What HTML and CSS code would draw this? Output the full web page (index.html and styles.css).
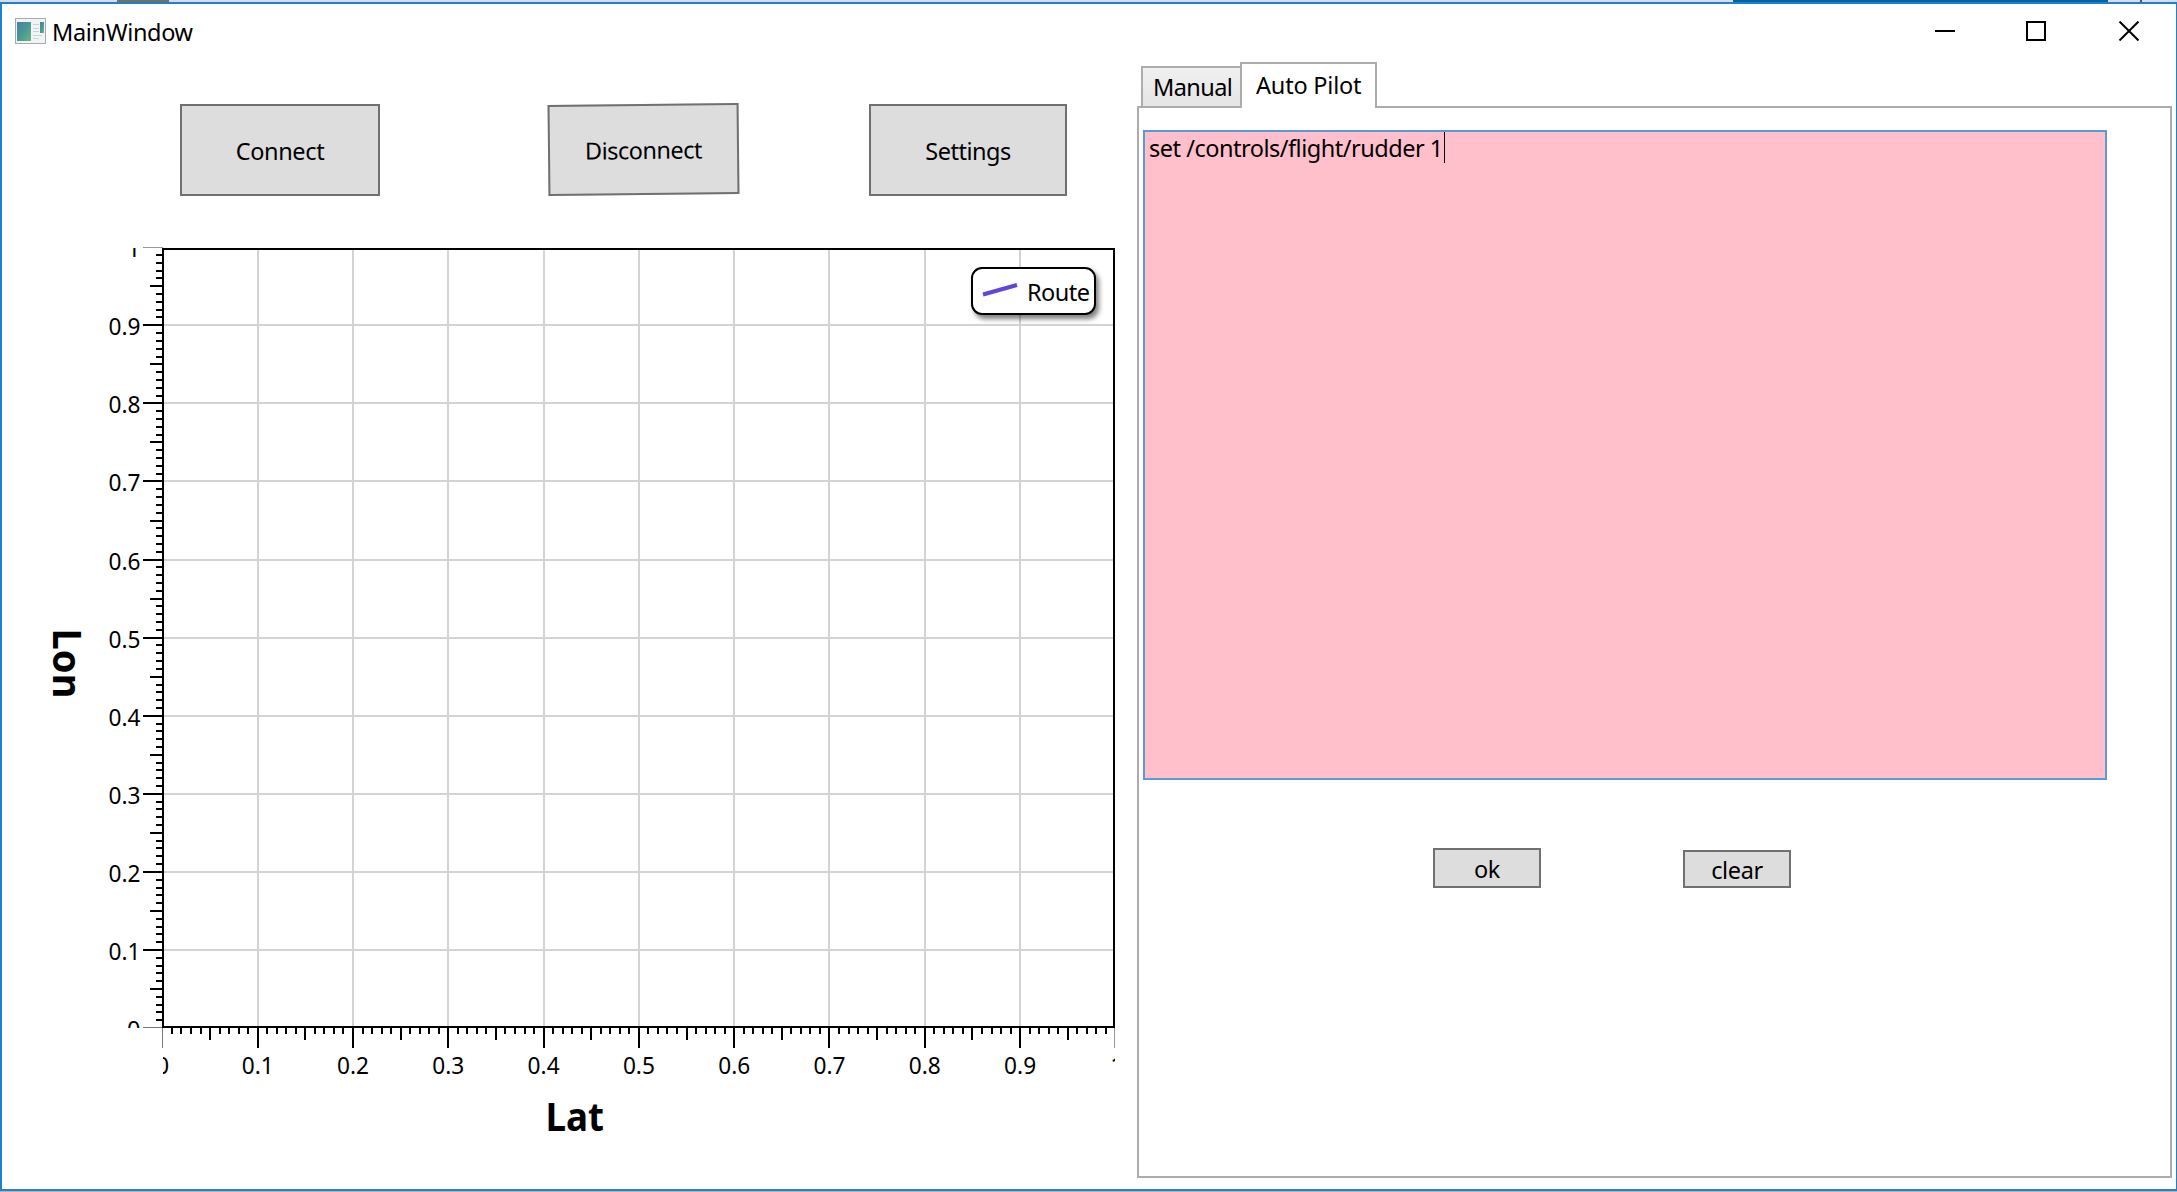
FILE: index.html
```html
<!DOCTYPE html>
<html lang="en">
<head>
<meta charset="utf-8">
<title>MainWindow</title>
<link rel="stylesheet" href="styles.css">
</head>
<body>
<div class="desktop-strip"><span class="strip-photo"></span><span class="strip-blue"></span><span class="strip-mark"></span></div>
<div class="window">
  <header class="titlebar">
    <svg class="app-icon" width="31" height="26" viewBox="0 0 31 26">
      <defs>
        <linearGradient id="screen" x1="0" y1="0" x2="1" y2="1"><stop offset="0" stop-color="#4a7fae"/><stop offset=".5" stop-color="#459a92"/><stop offset="1" stop-color="#6cb584"/></linearGradient>
      </defs>
      <rect x=".5" y=".5" width="30" height="25" fill="#f1f3f5" stroke="#a7abb0"/>
      <rect x="2" y="4" width="14" height="19" fill="url(#screen)"/>
      <path d="M18 6.500h6M18 10.500h6M18 13.500h6M18 17.500h9M18 20.500h6" stroke="#cdd1d8"/>
      <rect x="25" y="4" width="4" height="11" fill="url(#screen)"/>
    </svg>
    <span class="title">MainWindow</span>
    <svg class="controls" width="204" height="20" viewBox="0 0 204 20" fill="none" stroke="#000" stroke-width="2">
      <path d="M0 10h20"/><rect x="92" y="1" width="18" height="18"/><path d="M184.500 .5l19 19M203.500 .5l-19 19"/>
    </svg>
  </header>
  <main class="content">
    <section class="flight">
      <div class="actions">
        <button class="btn connect">Connect</button>
        <button class="btn disconnect">Disconnect</button>
        <button class="btn settings">Settings</button>
      </div>
      <div class="plot">
        <svg id="chart" width="1090" height="940" viewBox="30 240 1090 940"></svg>
        <div class="legend">
          <svg width="36" height="16" viewBox="0 0 36 16"><path d="M1 12.500L35 3" stroke="#6344d9" stroke-width="4"/></svg>
          <span>Route</span>
        </div>
      </div>
    </section>
    <section class="pilot">
      <nav class="tabs"><div class="tab manual">Manual</div><div class="tab active">Auto Pilot</div></nav>
      <div class="panel">
        <div class="commands"><span class="command">set /controls/flight/rudder 1</span><i class="caret"></i></div>
        <div class="panel-actions">
          <button class="btn ok">ok</button>
          <button class="btn clear">clear</button>
        </div>
      </div>
    </section>
  </main>
</div>
<script src="chart.js"></script>
</body>
</html>
```
FILE: styles.css
```css
* { box-sizing: border-box; }
body {
  margin: 0;
  width: 2177px;
  height: 1192px;
  overflow: hidden;
  background: #8dbde6;
  font: 23.5px/32px "Noto Sans", "Open Sans", sans-serif;
  color: #000;
}
.desktop-strip { display: flex; height: 2px; background: #d9dde3; }
.strip-photo { width: 52px; margin-left: 117px; background: #6f7360; }
.strip-blue { width: 375px; margin-left: 1564px; background: #0063a4; }
.strip-mark { width: 2px; margin-left: 32px; background: #4b5560; }
.window {
  display: flex;
  flex-direction: column;
  height: 1189px;
  background: #fff;
  border: 2px solid #1f7fd0;
  border-right-width: 1px;
  border-bottom-color: #3d7cb0;
}
.titlebar { display: flex; height: 58px; padding-left: 13px; }
.app-icon { margin-top: 14px; }
.title { margin: 12px 0 0 6px; letter-spacing: -0.35px; }
.controls { margin: 17px 37px 0 auto; }
.content { display: flex; flex: 1; }
.flight { width: 1135px; }
.actions { display: flex; padding: 42px 0 0 178px; height: 178px; }
.btn {
  height: 92px;
  padding: 1px 0 0;
  border: 2px solid #707070;
  background: #ddd;
  font: inherit;
  letter-spacing: -0.35px;
  color: #000;
}
.connect { width: 200px; }
.disconnect { width: 191px; height: 91px; margin-left: 168px; transform: rotate(-0.6deg); letter-spacing: -0.5px; }
.settings { width: 198px; margin-left: 130px; letter-spacing: -0.5px; }
.plot { position: relative; padding-left: 28px; }
#chart { display: block; }
#chart text { font: 23.5px "Noto Sans", "Open Sans", sans-serif; }
#chart .axis-title { font-size: 40px; font-weight: 700; }
.legend {
  position: absolute;
  left: 969px;
  top: 27px;
  display: flex;
  align-items: center;
  width: 125px;
  height: 48px;
  padding-left: 9px;
  gap: 9px;
  border: 2px solid #000;
  border-radius: 11px;
  background: #fff;
  box-shadow: 3px 4px 5px rgba(0, 0, 0, .5);
  letter-spacing: -0.5px;
}
.legend svg { margin-top: -2px; }
.legend span { padding-top: 2px; }
.pilot { width: 1035px; }
.tabs { display: flex; align-items: flex-end; height: 46px; padding-left: 4px; position: relative; z-index: 1; }
.tab { border: 2px solid #acacac; border-bottom: 0; }
.manual { width: 99px; height: 40px; margin-bottom: 2px; padding: 3px 0 0 10px; background: linear-gradient(#f0f0f0, #e5e5e5); border-right: 0; letter-spacing: -0.6px; }
.active { width: 137px; height: 46px; padding: 5px 0 0 14px; background: #fff; letter-spacing: -0.2px; }
.panel { width: 1035px; height: 1072px; margin-top: -2px; padding: 22px 0 0 4px; border: 2px solid #acacac; }
.commands { display: flex; width: 964px; height: 650px; padding-left: 4px; border: 2px solid #5f98d8; background: #ffc0cb; }
.command { letter-spacing: -0.49px; white-space: pre; }
.caret { width: 1px; height: 31px; margin-left: 1px; background: #000; }
.panel-actions { display: flex; align-items: flex-end; gap: 142px; padding: 68px 0 0 290px; }
.panel-actions .btn { width: 108px; }
.panel-actions .ok { height: 40px; }
.panel-actions .clear { height: 38px; padding-top: 2px; }
```
FILE: chart.js
```js
const svg = document.getElementById('chart');
const px = t => 162.4 + 953 * t;
const py = t => 1028.1 - 780.9 * t;
const parts = [];
const rect = (x, y, w, h, fill) => parts.push(`<rect x="${x}" y="${y}" width="${w}" height="${h}" fill="${fill}"/>`);

// Grid lines
for (let i = 1; i < 10; i++) {
  rect(Math.round(px(i / 10)) - 1, 249, 2, 778, '#d3d3d3');
  rect(164, Math.round(py(i / 10)) - 1, 950, 2, '#d3d3d3');
}
// Axis ticks: major every 10, medium every 5
for (let i = 1; i < 100; i++) {
  const len = i % 10 === 0 ? 20 : i % 5 === 0 ? 13 : 7;
  rect(163 - len, Math.round(py(i / 100)) - 1, len, 2, '#000');
  rect(Math.round(px(i / 100)) - 1, 1028, 2, len - (len < 20 ? 1 : 0), '#000');
}
rect(143, 247, 20, 1, '#999');
rect(143, 1027, 20, 1, '#777');
rect(162, 1028, 1, 20, '#777');
rect(1114, 1028, 1, 20, '#999');
parts.push('<rect x="163" y="249" width="951" height="778" fill="none" stroke="#000" stroke-width="2"/>');

// Tick labels, cut off at the ends of each axis
parts.push('<clipPath id="left"><rect x="90" y="248" width="60" height="780"/></clipPath>');
parts.push('<clipPath id="bottom"><rect x="163" y="1040" width="952" height="60"/></clipPath>');
for (let i = 0; i <= 10; i++) {
  const s = i === 0 ? '0' : i === 10 ? '1' : '0.' + i;
  const len = s.length > 1 ? ' textLength="32" lengthAdjust="spacingAndGlyphs"' : '';
  const dx = i === 10 ? 1.5 : 0;
  parts.push(`<g clip-path="url(#left)"><text x="140.500" y="${py(i / 10) + 10}" text-anchor="end"${len}>${s}</text></g>`);
  parts.push(`<g clip-path="url(#bottom)"><text x="${px(i / 10) + dx}" y="1074" text-anchor="middle"${len}>${s}</text></g>`);
}
parts.push('<text class="axis-title" x="545.500" y="1131" textLength="58.500" lengthAdjust="spacingAndGlyphs">Lat</text>');
parts.push('<text class="axis-title" transform="translate(52.500 628.500) rotate(90)" textLength="70" lengthAdjust="spacingAndGlyphs">Lon</text>');
svg.innerHTML = parts.join('');
```
